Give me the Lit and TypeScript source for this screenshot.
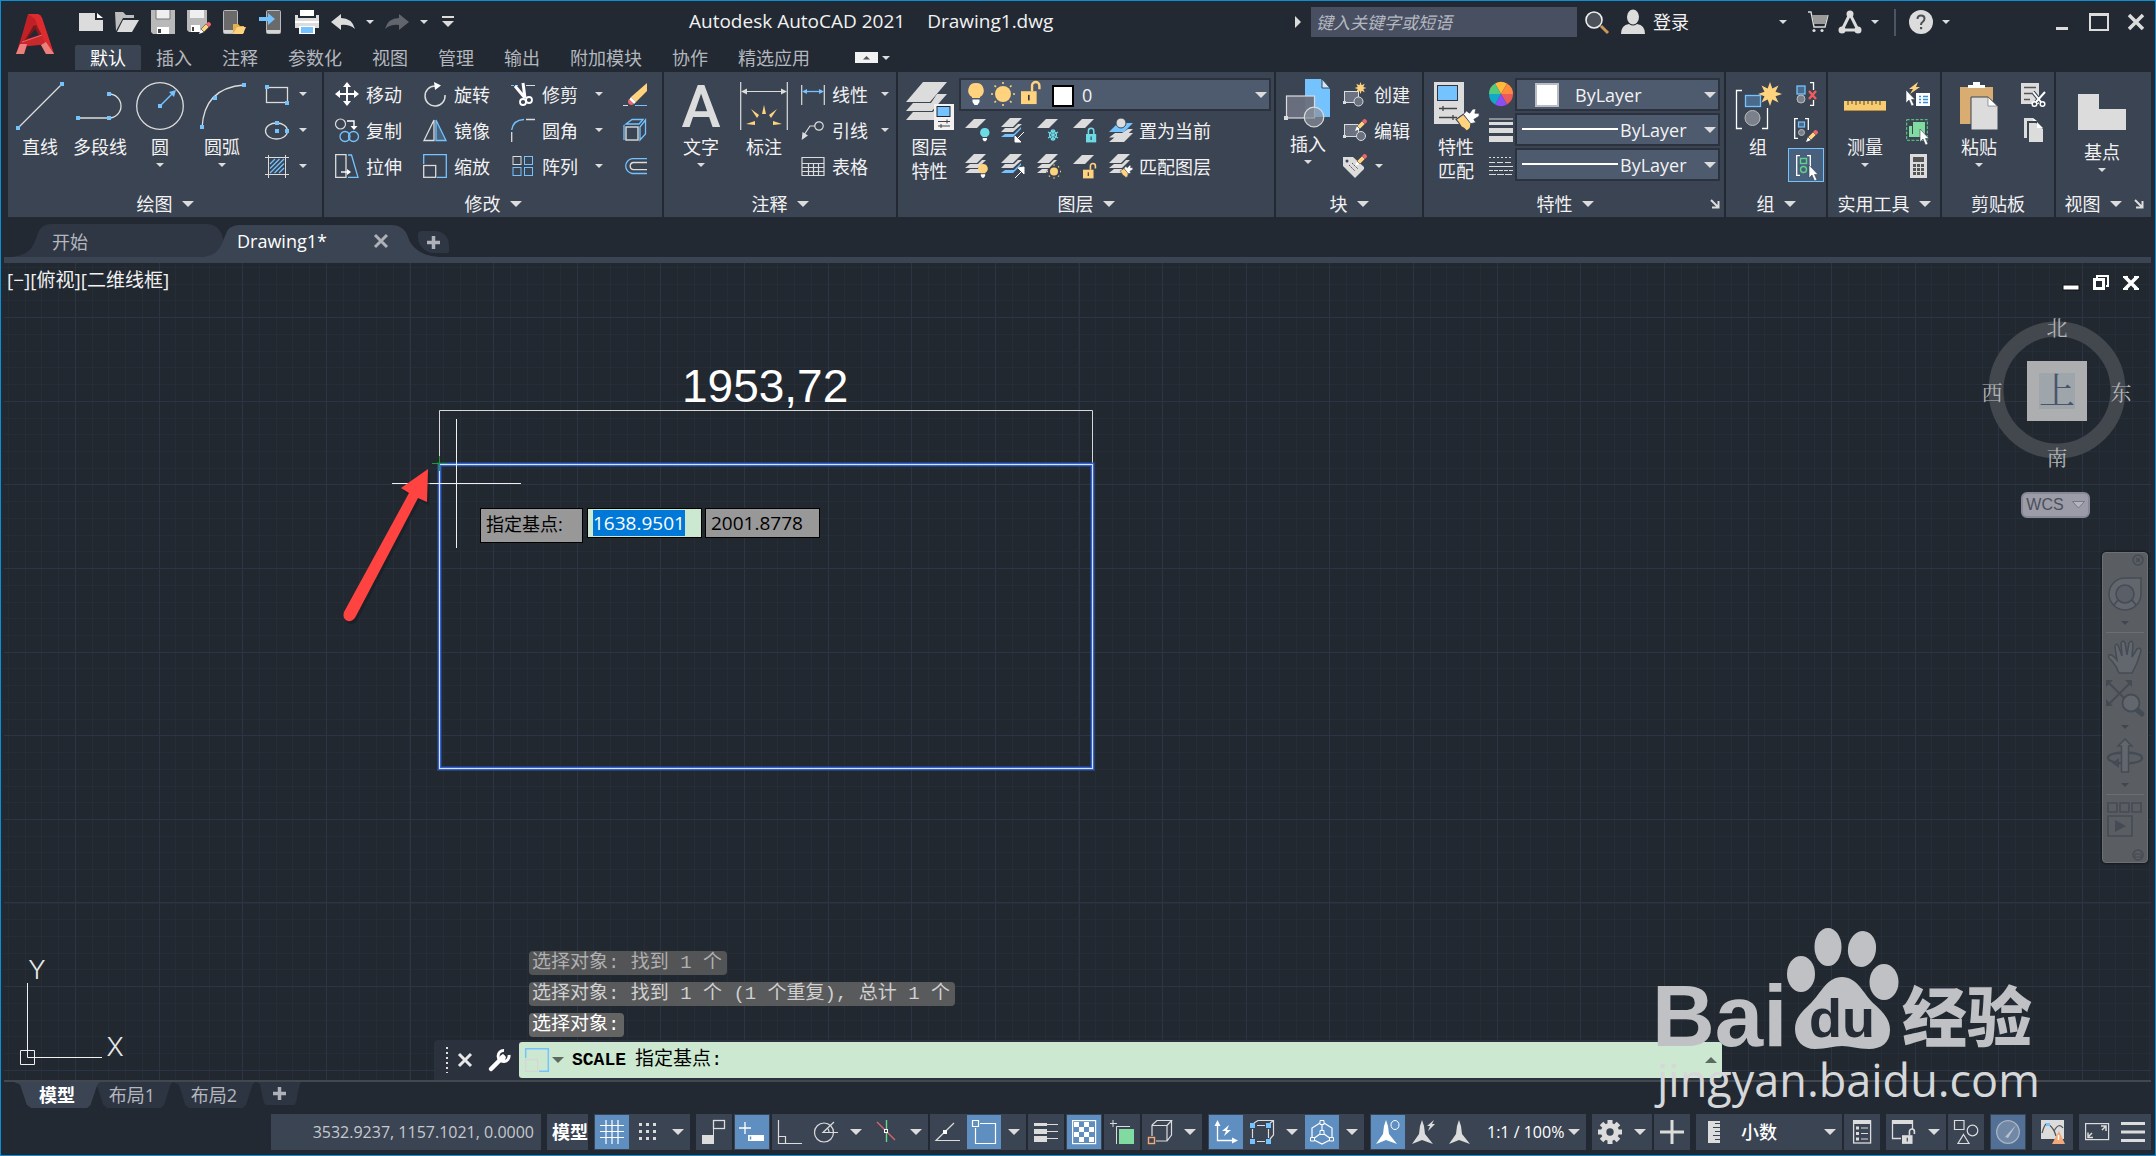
import { LitElement, html, svg, css, TemplateResult, SVGTemplateResult } from "lit";
import { customElement, query } from "lit/decorators.js";

const L = "#dcdcdc";
const B = "#74c3ff";
const Y = "#ffd27d";

const sq = (x: number, y: number) => svg`<rect x=${x - 2} y=${y - 2} width="4" height="4" fill=${B} />`;
const sheet = (y: number, fill = L) => svg`<path d="M0 ${y + 9} L9 ${y} H21 L12 ${y + 9} Z" fill=${fill} />`;
const pencil = (x: number, y: number) => svg`<g transform="translate(${x} ${y})">
  <path d="M0 12 L2 7 L5 10 Z" fill="#fff" /><path d="M2 7 L7 2 L10 5 L5 10 Z" fill=${Y} stroke="#3b4453" stroke-width=".6" />
  <path d="M7 2 L9 0 Q12 0 12 3 L10 5 Z" fill="#f2676c" /></g>`;
const pointer = (x: number, y: number) => svg`<path transform="translate(${x} ${y})" d="M0 0 V13 L3 10 L5.500 16 L8 15 L5.500 9.500 H9 Z" fill="#fff" stroke="#3b4453" stroke-width=".6" />`;
const brush = (x: number, y: number, s: number) => svg`<g transform="translate(${x} ${y}) scale(${s})">
  <path d="M0 9 L7 4 L14 12 Q15 18 10 20 Q8 17 5 16 Q3 12 0 9 Z" fill=${Y} stroke="#3b4453" stroke-width="1" />
  <path d="M7 4 L10 1 L13 3 L16 -1 L19 -1 L18 3 L22 3 L22 6 L17 9 L19 12 L14 13 Z" fill="#fff" stroke="#3b4453" stroke-width=".8" /></g>`;
const burst = (cx: number, cy: number, r: number) => {
  const p: string[] = [];
  for (let i = 0; i < 16; i++) {
    const a = (i * Math.PI) / 8;
    const q = i % 2 ? r * 0.5 : r;
    p.push(`${(cx + q * Math.sin(a)).toFixed(1)},${(cy - q * Math.cos(a)).toFixed(1)}`);
  }
  return svg`<polygon points=${p.join(" ")} fill=${Y} />`;
};
const bulb = (x: number, y: number, s: number, fill: string) => svg`<g transform="translate(${x} ${y}) scale(${s})">
  <path d="M8 0 A7.500 7.500 0 0 1 12 14 V15 H4 V14 A7.500 7.500 0 0 1 8 0 Z" fill=${fill} /><path d="M4.500 16.500 H11.500 V19 L9.500 22 H6.500 L4.500 19 Z" fill="#fff" /></g>`;
const sun = (cx: number, cy: number, r: number, o: number) => svg`<circle cx=${cx} cy=${cy} r=${r} fill=${Y} />
  ${[0, 45, 90, 135, 180, 225, 270, 315].map((a) => svg`<path d="M${cx} ${cy - r - 2} V${cy - o}" stroke=${Y} stroke-width="1.6" transform="rotate(${a} ${cx} ${cy})" />`)}`;
const lock = (x: number, y: number, s: number, fill: string, open: boolean) => svg`<g transform="translate(${x} ${y}) scale(${s})">
  <path d=${open ? "M12 10 V4 A4 4 0 0 1 20 4 V8" : "M4 10 V5 A4.500 4.500 0 0 1 13 5 V10"} fill="none" stroke=${fill} stroke-width="2.6" />
  <rect x="0" y="10" width="17" height="14" fill=${fill} /><path d="M8.500 14 V20" stroke="#333a46" stroke-width="1.8" /></g>`;

const ICONS: Record<string, [number, number, SVGTemplateResult]> = {
  caret: [8, 4, svg`<path d="M0 0 H8 L4 4 Z" fill=${L} />`],
  bigCaret: [12, 6, svg`<path d="M0 0 H12 L6 6 Z" fill=${L} />`],
  corner: [10, 10, svg`<path d="M1 1 L8 8 M8.500 2 V8.500 H2" stroke=${L} stroke-width="2" fill="none" />`],
  logo: [40, 44, svg`<path d="M13 1 H23 Q26 2 27 5 L39 41 H31 L26 32 L12 33 L9 41 H1 Q8 20 13 1 Z" fill="#bf2127" />
    <path d="M13 1 H23 Q26 2 27 5 L39 41 H33 L20 6 Z" fill="#dc2c30" /><path d="M21 12 L12 26 L25 22 Z" fill="#222933" />
    <path d="M19 12 L8 30 L12 26 L21 15 Z" fill="#7f1519" /><path d="M21 12 L27 22 L24 23 L20 15 Z" fill="#8f191d" />
    <path d="M7 29 L27 22 L30 31 L12 33 L5 34 Z" fill="#c9282d" /><path d="M7 29 L27 22" stroke="#e9666a" stroke-width="1" />
    <path d="M1 41 L5 31 L12 31 L9 41 Z" fill="#ec807e" /><path d="M26 32 L31 29 L39 41 H31 Z" fill="#ec807e" />`],
  new: [24, 24, svg`<path d="M0 3 H16 V10 H24 V21 H0 Z" fill=${L} /><path d="M18 3 L24 8 H18 Z" fill="#fff" />`],
  open: [24, 24, svg`<path d="M0 2 H8 L11 5 H19 V8 H8 L1 21 Z" fill="#bdbdbd" /><path d="M8 10 H24 L17 22 H2 Z" fill=${L} />`],
  save: [24, 24, svg`<path d="M0 0 H24 V24 H2 L0 22 Z" fill="#b9b9b9" /><rect x="5" y="0" width="14" height="9" fill="#efefef" /><rect x="6" y="17" width="12" height="7" fill="#fff" /><rect x="7" y="19" width="3" height="4" fill="#444" /><path d="M5 0V9H19V0" stroke="#777" fill="none" />`],
  saveas: [24, 24, svg`<path d="M0 0 H20 V14 L13 22 H2 L0 20 Z" fill="#b9b9b9" /><rect x="3" y="0" width="14" height="8" fill="#efefef" /><rect x="4" y="15" width="9" height="7" fill="#fff" /><rect x="5" y="17" width="2" height="4" fill="#444" />${pencil(12, 12)}`],
  mobOpen: [24, 24, svg`<rect x=".5" y=".5" width="14" height="23" rx="1" fill="#6a6a6a" stroke="#b9b9b9" /><rect x="1" y="20" width="13" height="3" fill="#d5d5d5" /><path d="M10 14 H15 L17 16 H21 V23 H10 Z" fill="#e2b04f" /><path d="M14 17 H23 L20 24 H10 Z" fill=${Y} />`],
  mobSave: [24, 24, svg`<rect x="7.500" y=".5" width="14" height="23" rx="1" fill="#6a6a6a" stroke="#b9b9b9" /><rect x="8" y="20" width="13" height="3" fill="#d5d5d5" /><path d="M0 7 H9 V3 L16 9 L9 15 V11 H0 Z" fill=${B} />`],
  print: [24, 24, svg`<path d="M5 0 H19 V6 H5 Z" fill="#fff" /><path d="M0 5 H3 V8 H21 V5 H24 V18 H0 Z" fill=${L} /><rect x="0" y="11" width="24" height="2" fill="#fff" /><path d="M4 16 H20 V24 H4 Z" fill="#fff" /><rect x="6" y="17" width="12" height="6" fill=${B} />`],
  undo: [24, 16, svg`<path d="M0 8 L10 0 V4 Q21 4 24 15 Q18 10 10 11 V16 Z" fill=${L} />`],
  redo: [24, 16, svg`<path d="M24 8 L14 0 V4 Q3 4 0 15 Q6 10 14 11 V16 Z" fill="#62666c" />`],
  custom: [12, 12, svg`<rect width="12" height="2" fill=${L} /><path d="M0 5 H12 L6 11 Z" fill=${L} />`],
  tri: [6, 12, svg`<path d="M0 0 L6 6 L0 12 Z" fill=${L} />`],
  search: [24, 24, svg`<path d="M16 16 L23 23" stroke="#c9965b" stroke-width="3" /><circle cx="9" cy="10" r="8" fill="#4b525c" stroke="#eee" stroke-width="1.6" />`],
  user: [24, 24, svg`<ellipse cx="12" cy="7" rx="6" ry="7.500" fill=${L} /><path d="M0 24 Q0 15 8 14 Q12 17 16 14 Q24 15 24 24 Z" fill=${L} />`],
  cart: [22, 22, svg`<path d="M1 1 H4 L7 16 H18 L21 4" fill="none" stroke=${L} stroke-width="1.4" /><path d="M5 4 H21 L18 13 H7 Z" fill="#9a9a9a" /><circle cx="7" cy="19.500" r="1.600" fill=${L} /><circle cx="15" cy="19.500" r="1.600" fill=${L} />`],
  a360: [24, 24, svg`<path d="M12 4 L4 20 H20 Z" fill="none" stroke=${L} stroke-width="3" /><circle cx="12" cy="4" r="3.500" fill=${L} /><circle cx="4" cy="20" r="3.500" fill=${L} /><circle cx="20" cy="20" r="3.500" fill=${L} />`],
  help: [24, 24, svg`<circle cx="12" cy="12" r="12" fill=${L} /><path d="M8.500 9 Q8.500 5.500 12 5.500 Q15.500 5.500 15.500 8.500 Q15.500 10.500 13.500 12 Q12 13 12 15" fill="none" stroke="#4a4f58" stroke-width="2" /><rect x="11" y="17" width="2.200" height="2.200" fill="#4a4f58" />`],
  min: [20, 20, svg`<rect x="4" y="15" width="12" height="3" fill=${L} />`],
  max: [20, 20, svg`<path d="M0 1 H20 V19 H0 Z M2 4 V17 H18 V4 Z" fill=${L} fill-rule="evenodd" />`],
  close: [20, 20, svg`<path d="M3 3 L17 17 M17 3 L3 17" stroke=${L} stroke-width="3.500" />`],
  ribMin: [23, 11, svg`<rect width="23" height="11" fill="#f2f2f2" /><path d="M8 7.500 H15 L11.500 4 Z" fill="#555" />`],

  line: [48, 48, svg`<path d="M2 46 L46 2" stroke=${L} stroke-width="1.3" />${sq(2, 46)}${sq(46, 2)}`],
  pline: [48, 48, svg`<path d="M2 36 H33 A12 12 0 0 0 33 12" stroke=${L} stroke-width="1.300" fill="none" />${sq(2, 36)}${sq(33, 36)}${sq(33, 12)}`],
  circle: [48, 48, svg`<circle cx="24" cy="24" r="23.300" stroke=${L} stroke-width="1.300" fill="none" /><path d="M24 24 L38 10" stroke=${B} stroke-width="1.500" /><path d="M40 8 L33 10 L38 15 Z" fill=${B} />${sq(24, 24)}`],
  arc: [48, 48, svg`<path d="M4 46 Q6 6 46 3" stroke=${L} stroke-width="1.300" fill="none" />${sq(4, 45)}${sq(17, 16)}${sq(46, 3)}`],
  rect: [24, 24, svg`<rect x="1.500" y="5.500" width="21" height="15" stroke=${L} fill="none" stroke-width="1.300" />${sq(2, 5)}${sq(22, 21)}`],
  ellipse: [24, 24, svg`<ellipse cx="11.500" cy="13" rx="11" ry="8" stroke=${L} fill="none" stroke-width="1.300" />${sq(12, 5)}${sq(12, 13)}${sq(22, 13)}`],
  hatch: [24, 24, svg`<path d="M3.500 1 V24 M20.500 1 V24 M0 3.500 H24 M0 20.500 H24" stroke=${L} /><path d="M5 10 L10 5 M5 14.500 L14.500 5 M5 19 L19 5 M9.500 19 L19 9.500 M14 19 L19 14" stroke=${B} stroke-width="1.300" />`],
  move: [24, 24, svg`<path d="M12 3 V21 M3 12 H21" stroke="#fff" stroke-width="2" /><path d="M12 0 L16 5 H8 Z M12 24 L8 19 H16 Z M0 12 L5 8 V16 Z M24 12 L19 16 V8 Z" fill="#fff" />`],
  rotate: [24, 24, svg`<path d="M12 4 A10 10 0 1 0 22 13" fill="none" stroke=${L} stroke-width="1.500" /><path d="M11 0 L18 3.500 L12 8 Z" fill="#fff" />`],
  trim: [24, 24, svg`<path d="M0 3.500 H8" stroke=${B} stroke-dasharray="3 1" /><path d="M15 3.500 H24" stroke=${L} /><path d="M4 4 L14 16 M12 1 L14 16" stroke="#fff" stroke-width="3" /><circle cx="12" cy="20" r="3" fill="none" stroke="#fff" stroke-width="1.800" /><circle cx="18" cy="18" r="3" fill="none" stroke="#fff" stroke-width="1.800" />`],
  copy: [24, 24, svg`<circle cx="5.500" cy="6" r="5" fill="none" stroke=${L} stroke-width="1.200" /><path d="M12 3 H19 V9" fill="none" stroke="#fff" stroke-width="1.400" /><path d="M15.500 8 H22.500 L19 12 Z" fill="#fff" /><circle cx="10" cy="18.500" r="5" fill="none" stroke=${B} stroke-width="1.300" /><circle cx="18.500" cy="18.500" r="5" fill="none" stroke=${B} stroke-width="1.300" />`],
  mirror: [24, 24, svg`<path d="M11 2 V22.500 H1 Z" fill="none" stroke=${L} stroke-width="1.300" /><path d="M13 2 V22.500 H23 Z" fill="#47637f" stroke=${B} stroke-width="1.300" />`],
  fillet: [24, 24, svg`<path d="M.7 12 Q2 2 13 1.500" fill="none" stroke=${B} stroke-width="1.400" /><path d="M.7 14 V24 M15 1.500 H24" stroke=${L} stroke-width="1.300" />`],
  stretch: [24, 24, svg`<path d="M.7 .7 H11 V23.300 H.7 Z" fill="none" stroke=${L} stroke-width="1.300" /><path d="M13 1 H16.500 L23 23.300 H13" fill="none" stroke=${B} stroke-width="1.300" /><path d="M6 18 H13" stroke="#fff" stroke-width="1.400" /><path d="M12 15 L16 18 L12 21 Z" fill="#fff" />`],
  scale: [24, 24, svg`<path d="M.7 10 V.7 H23.300 V23.300 H14" fill="none" stroke=${B} stroke-width="1.300" /><rect x=".7" y="11.500" width="12" height="11.800" fill="none" stroke=${L} stroke-width="1.300" />`],
  array: [24, 24, svg`<rect x="2" y="2.500" width="8" height="8" fill="none" stroke=${L} /><rect x="13.500" y="2.500" width="8" height="8" fill="none" stroke=${B} /><rect x="2" y="13.500" width="8" height="8" fill="none" stroke=${B} /><rect x="13.500" y="13.500" width="8" height="8" fill="none" stroke=${B} />`],
  erase: [24, 24, svg`<path d="M24 1 V9 L13 20 L8 15 Z" fill=${Y} /><path d="M8 15 L13 20 L11 22 L6 18 Z" fill="#fff" /><path d="M6 17 L11 22 Q8 24 6 22 Q4 20 6 17 Z" fill="#f2676c" /><path d="M0 23.500 H5" stroke=${L} /><path d="M12 23.500 H24" stroke=${B} />`],
  explode: [24, 24, svg`<rect x="3" y="9" width="12" height="13" fill="none" stroke=${L} stroke-width="1.400" /><path d="M1 22 V7 M3 6 L9 1.500 H20 L16 6 Z M17 9 L22.500 2 V16 L17 22 Z" fill="none" stroke=${B} stroke-width="1.300" />`],
  offset: [24, 24, svg`<path d="M24 4.700 H9 A7.500 7.500 0 0 0 9 19.500 H24" fill="none" stroke=${B} stroke-width="1.300" /><path d="M24 8.500 H10 A3.700 3.700 0 0 0 10 15.700 H24" fill="none" stroke=${L} stroke-width="1.300" />`],
  dim: [48, 48, svg`<path d="M.7 0 V48 M47.300 0 V48 M2 9.500 H46" stroke=${L} stroke-width="1.200" /><path d="M1 9.500 L7 6.500 V12.500 Z M47 9.500 L41 6.500 V12.500 Z" fill=${L} />
    <g fill=${Y}><path d="M22 32 L24 23 L26 32 Z" /><path d="M17 36 L11 27 L19 33 Z" /><path d="M31 36 L37 27 L29 33 Z" /><path d="M15 39 L6 42 L15 43 Z" /><path d="M33 39 L42 42 L33 43 Z" /></g>`],
  linear: [24, 24, svg`<path d="M.7 3 V23 M23.300 3 V23" stroke=${L} stroke-width="1.200" /><path d="M3 9.500 H21" stroke=${B} stroke-width="1.300" /><path d="M1 9.500 L6 7 V12 Z M23 9.500 L18 7 V12 Z" fill=${B} />`],
  leader: [24, 24, svg`<circle cx="18" cy="8" r="4.200" fill="none" stroke=${L} stroke-width="1.200" /><path d="M14 8 H9 L3 17" fill="none" stroke=${L} stroke-width="1.200" /><path d="M.7 22 L1.500 14 L7 17.500 Z" fill=${L} />`],
  table: [24, 24, svg`<path d="M1 3.500 H23 V21.500 H1 Z M1 9.500 H23 M1 13.500 H23 M1 17.500 H23 M7.500 9 V21 M12.500 9 V21 M17.500 9 V21" fill="none" stroke=${L} stroke-width="1.200" />`],
  layers: [48, 48, svg`<path d="M0 20 L17 0 H41 L24 20 Z" fill=${L} /><path d="M0 29 L7 21 H25 L31 12 H41 L26 29 Z" fill=${L} /><path d="M0 38 L7 30 H27 L31 24 H36 V38 Z" fill=${L} /><rect x="28" y="22" width="20" height="26" fill="#f2f2f2" /><rect x="31" y="24.500" width="13" height="10" fill=${B} stroke="#223" /><path d="M32 39.500 H44 M32 44 H44 M41 37.500 V41.500 M35 42 V46" stroke="#444" />`],
  lyOff: [24, 24, svg`${sheet(1)}${bulb(15, 10, 0.6, "#6cdbe6")}`],
  lyIso: [24, 24, svg`${sheet(0)}<path d="M0 19 L4 16 H13 L20 9 V11 L12 19 Z" fill=${B} /><path d="M0 14 L4 10 H13 L17 6 H21 L12 14 Z" fill=${L} /><path d="M23 14 L15 22 M14 18 V24 H20 Z" stroke="#fff" fill="#fff" />`],
  lyFrz: [24, 24, svg`${sheet(1)}<g stroke="#6cdbe6" stroke-width="1.300" fill="none"><path d="M16 11 V23 M11 14 L21 20 M21 14 L11 20" /><circle cx="16" cy="17" r="3.500" /><path d="M14 12 L16 14 L18 12 M14 22 L16 20 L18 22" /></g>`],
  lyLock: [24, 24, svg`${sheet(1)}${lock(13, 10, 0.6, "#6cdbe6", false)}`],
  lyOn: [24, 24, svg`${sheet(0)}<path d="M0 14 L5 10 H13 L17 6 H21 L13 14 Z M0 19 L5 15 H13 L17 11 V19 Z" fill=${L} />${bulb(13, 10, 0.62, Y)}`],
  lyUniso: [24, 24, svg`${sheet(0)}<path d="M0 19 L4 16 H13 L20 9 V11 L12 19 Z" fill=${B} /><path d="M0 14 L4 10 H13 L17 6 H21 L12 14 Z" fill=${L} /><path d="M14 24 L21 17 M23 13 V20 L17 14 Z" stroke="#fff" fill="#fff" />`],
  lyThaw: [24, 24, svg`${sheet(0)}<path d="M0 14 L5 10 H13 L17 6 H20 L12 14 Z M0 19 L5 15 H11 L9 19 Z" fill=${L} />${sun(17, 17.5, 4, 7)}`],
  lyUnlock: [24, 24, svg`${sheet(1)}${lock(10, 9.5, 0.62, Y, true)}`],
  lyCur: [24, 24, svg`<path d="M0 24 L6 19 H13 L19 15 H24 L15 24 Z M0 19.500 L6 15 H13 L19 11 H24 L15 19.500 Z" fill=${L} /><path d="M0 14 L9 5 H24 L15 14 Z" fill=${B} /><circle cx="12" cy="5" r="5" fill=${L} stroke="#3b4453" />`],
  lyMatch: [24, 24, svg`${sheet(0)}<path d="M0 14 L5 10 H13 L17 6 H21 L13 14 Z M0 19 L5 15 H13 V19 Z" fill=${L} />${brush(11, 12, 0.58)}`],
  layState: [108, 24, svg`${bulb(2, 1, 1, Y)}${sun(37, 12, 8, 12)}${lock(55, 0, 0.92, Y, true)}<rect x="87" y="4" width="20" height="20" fill="#fff" stroke="#000" stroke-width="2" />`],
  insert: [48, 48, svg`<path d="M21 0 H37 L46 10 V38 H21 Z" fill=${B} /><path d="M38 0 L46 9 H38 Z" fill="#cfe8ff" stroke="#3b4453" /><rect x="2.500" y="17" width="28" height="22" fill="#6a7180" fill-opacity=".95" stroke=${L} stroke-width="1.200" /><circle cx="30" cy="38" r="9.800" fill="#8a909c" fill-opacity=".7" stroke=${L} stroke-width="1.200" /><rect x="0" y="37" width="4" height="4" fill=${L} />`],
  create: [24, 24, svg`<rect x="1.500" y="9.500" width="14" height="11" fill="#6a7180" stroke=${L} /><circle cx="15.500" cy="19.500" r="4.500" fill="#6a7180" stroke=${L} /><rect y="19" width="3" height="3" fill=${L} />${burst(17.500, 6, 6)}`],
  edit: [24, 24, svg`<rect x="1.500" y="6.500" width="14" height="12" fill="#6a7180" stroke=${L} /><circle cx="18" cy="18" r="4.500" fill="#6a7180" stroke=${L} /><rect y="17" width="3" height="3" fill=${L} />${pencil(12, 1)}`],
  tag: [24, 24, svg`<path d="M0 3 H10 L21 13 V15 L12 24 L0 12 Z" fill=${L} /><circle cx="4" cy="7" r="1.500" fill="#3b4453" /><path d="M6 11 L12 17 M9 9 L15 15" stroke="#555" stroke-dasharray="2 1" />${pencil(12, 0)}`],
  matchProp: [48, 48, svg`<path d="M2 0 H32 V42 H2 Z" fill=${L} /><rect x="5.500" y="3.500" width="20" height="15" fill=${B} stroke="#334" /><path d="M7 26.500 H25 M11 24 V29 M7 35.500 H25 M21 33 V38" stroke="#444" stroke-width="1.300" />${brush(24, 28, 1.05)}`],
  wheel: [24, 24, svg`${["#ffb93c", "#ff8b3e", "#ec5a5a", "#8b4df5", "#12a9c8", "#55c97d"].map((c, i) => svg`<path d="M12 12 V0 A12 12 0 0 1 22.400 6 Z" fill=${c} transform="rotate(${i * 60 - 30} 12 12)" />`)}`],
  weights: [24, 24, svg`<path d="M0 1 H24" stroke=${L} /><rect y="4" width="24" height="3" fill=${L} /><rect y="10" width="24" height="5" fill=${L} /><rect y="18" width="24" height="6" fill=${L} />`],
  types: [24, 24, svg`<path d="M0 3.500 H24" stroke=${L} stroke-dasharray="2 2" /><path d="M0 8.500 H24" stroke=${L} stroke-dasharray="6 2" /><path d="M0 12.500 H24" stroke=${L} /><path d="M0 16.500 H24" stroke=${L} stroke-dasharray="4 1" /><path d="M0 20.500 H24" stroke=${L} stroke-dasharray="7 1" />`],
  group: [48, 48, svg`<path d="M8 8.500 H2.500 V46.500 H8 M28 46.500 H33.500 V26" fill="none" stroke="#fff" stroke-width="1.300" /><rect x="11.500" y="13.500" width="15" height="11" fill="#4a6a8c" stroke=${B} stroke-width="1.300" /><circle cx="18.500" cy="36" r="7.500" fill="#7a808c" stroke="#bbb" />${burst(36, 12, 12)}`],
  ungroup: [24, 24, svg`<path d="M16 .7 H19.500 V8 M19.500 18 V23.300 H16" fill="none" stroke="#fff" stroke-width="1.300" /><rect x="3" y="4" width="8" height="8" fill="#4a6a8c" stroke=${B} stroke-width="1.300" /><circle cx="7" cy="17" r="4" fill="#7a808c" stroke="#bbb" /><path d="M15 9 L22 17 M22 9 L15 17" stroke="#f25c5c" stroke-width="2.400" />`],
  grpEdit: [24, 24, svg`<path d="M4 .7 H.7 V20.300 H4 M11 .7 H14.300 V12" fill="none" stroke="#fff" stroke-width="1.300" /><rect x="4.500" y="4" width="6" height="5" fill="#4a6a8c" stroke=${B} stroke-width="1.200" /><circle cx="7.500" cy="14.500" r="3" fill="#7a808c" stroke="#bbb" />${pencil(12, 12)}`],
  grpSel: [24, 24, svg`<path d="M6 2.700 H2.700 V22.300 H6 M13 2.700 H16.300 V14" fill="none" stroke="#fff" stroke-width="1.300" /><rect x="6.500" y="5.500" width="6" height="5" fill="none" stroke="#5fd38a" stroke-width="1.400" /><circle cx="9.500" cy="16.500" r="3" fill="none" stroke="#5fd38a" stroke-width="1.400" />${pointer(15, 12)}`],
  measure: [48, 48, svg`<rect x="3" y="19" width="42" height="10" fill="#f7cb72" /><path d="M3 28.500 H45" stroke="#b98d3d" /><path d="M7 19 V23 M11 19 V22 M15 19 V23 M19 19 V22 M23 19 V23 M27 19 V22 M31 19 V23 M35 19 V22 M39 19 V23" stroke="#54451f" />`],
  quick: [24, 24, svg`<path d="M12 0 L3 7 H7 L4 12 L14 5 H10 Z" fill=${Y} /><rect x="10" y="11" width="14" height="13" fill="#fff" /><path d="M13 14.500 H15 M17 14.500 H22 M13 17.500 H15 M17 17.500 H22 M13 20.500 H15 M17 20.500 H22" stroke="#2f8fe0" stroke-width="1.500" />${pointer(0, 8)}`],
  selAll: [24, 24, svg`<rect x=".7" y="1.700" width="20.600" height="20.600" fill="none" stroke="#5fd38a" stroke-dasharray="3 1.500" /><path d="M3 8 H6 V16 H15 V19 H3 Z" fill="#7fdba0" /><rect x="7" y="4" width="12" height="12" fill="#7fdba0" />${pointer(14, 11)}`],
  calc: [24, 24, svg`<rect x="4" width="17" height="24" fill=${L} /><rect x="7" y="3" width="11" height="5" fill="#555" /><path d="M7 11.500 H10 M11 11.500 H14 M15 11.500 H18 M7 15.500 H10 M11 15.500 H14 M15 15.500 H18 M7 19.500 H10 M11 19.500 H14 M15 19.500 H18" stroke="#555" stroke-width="3" />`],
  paste: [48, 48, svg`<path d="M5 5 H38 V24 H16 V42 H5 Z" fill="#d9ac72" /><path d="M13 6 V3 H18 V0 H25 V3 H30 V6 Z" fill="#fff" /><path d="M16 15 H33 L43 24 V48 H16 Z" fill=${L} stroke="#3b4453" /><path d="M33 15 L42 24 H33 Z" fill="#fff" stroke="#3b4453" stroke-width=".5" />`],
  cut: [24, 24, svg`<rect x="0" y="1" width="18" height="21" fill=${L} /><path d="M3 5.500 H15 M3 11.500 H11 M3 17.500 H9" stroke="#555" stroke-width="1.400" /><path d="M12 10 L20 20 M24 10 L15 20" stroke="#3b4453" stroke-width="4" /><path d="M12 10 L20 20 M24 10 L15 20" stroke="#fff" stroke-width="2" /><circle cx="13.500" cy="22" r="2.300" fill="#3b4453" stroke="#fff" stroke-width="1.500" /><circle cx="21.500" cy="22" r="2.300" fill="#3b4453" stroke="#fff" stroke-width="1.500" />`],
  copyClip: [24, 24, svg`<path d="M3 0 H12 V3 H6 V20 H3 Z" fill=${L} /><path d="M8 5 H15 L22 11 V24 H8 Z" fill=${L} /><path d="M16 4 L22 10 H16 Z M12 0 L16 3 H12 Z" fill="#fff" />`],
  base: [48, 48, svg`<path d="M0 12 H21 V27 H48 V48 H0 Z" fill=${L} />`],

  sGrid: [36, 36, svg`<path d="M12 6 V30 M18 6 V30 M24 6 V30 M6 11.500 H30 M6 17.500 H30 M6 23.500 H30" stroke="#fff" stroke-width="1.200" />`],
  sSnap: [36, 36, svg`${[10, 17, 24].map((x) => [10, 17, 24].map((y) => svg`<rect x=${x - 1} y=${y - 1} width="3" height="3" fill=${L} />`))}`],
  sInfer: [36, 36, svg`<rect x="17.500" y="6.500" width="11" height="8" fill="none" stroke=${L} stroke-width="1.300" /><path d="M17.500 14 V21" stroke=${L} /><rect x="6" y="21" width="12" height="9" fill=${L} />`],
  sDyn: [36, 36, svg`<path d="M11 8 V20 M5 14 H17" stroke="#fff" stroke-width="1.300" /><rect x="14" y="21" width="16" height="6" fill="#fff" /><path d="M16.500 22.500 V25.500" stroke="#5f8fc0" stroke-width="1.500" />`],
  sOrtho: [36, 36, svg`<path d="M6.500 6 V29.500 H30 M6.500 22.500 H13.500 V29" fill="none" stroke=${L} stroke-width="1.200" />`],
  sPolar: [36, 36, svg`<circle cx="16" cy="18.500" r="9.500" fill="none" stroke=${L} stroke-width="1.200" /><path d="M30 18.500 H15 L26 8 M21 18 Q21 15 19 14" fill="none" stroke=${L} stroke-width="1.200" />`],
  sIso: [36, 36, svg`<path d="M9 8 L27 26" stroke="#d8686c" stroke-width="1.200" /><path d="M18.500 6 V28" stroke="#69d58c" stroke-width="1.400" /><rect x="16.500" y="15.500" width="3" height="3" fill="#3b4453" stroke="#fff" />`],
  sTrack: [36, 36, svg`<path d="M30 26.500 H6 L24 9" fill="none" stroke=${L} stroke-width="1.200" /><rect x="13" y="16" width="4" height="4" fill="#fff" />`],
  sOsnap: [36, 36, svg`<path d="M14 9.500 H29.500 V29.500 H9.500 V14 M6.500 6.500 H12.500 V12.500 H6.500 Z" fill="none" stroke="#fff" stroke-width="1.200" />`],
  sLw: [36, 36, svg`<path d="M6 10.500 H30 M6 17.500 H30 M6 24.500 H30" stroke=${L} /><rect x="6" y="9" width="13" height="3" fill=${L} /><rect x="6" y="15" width="13" height="5" fill=${L} /><rect x="6" y="22" width="13" height="6" fill=${L} />`],
  sTrans: [36, 36, svg`<rect x="6.600" y="6.600" width="23" height="23" fill="none" stroke="#fff" stroke-width="1.200" />${[0, 1, 2, 3].map((r) => [0, 1, 2, 3].map((c) => ((r + c) % 2 ? svg`` : svg`<rect x=${8 + c * 5} y=${8 + r * 5} width="5" height="5" fill="#fff" />`)))}`],
  sCycle: [36, 36, svg`<path d="M9 6 V13 M6 9.500 H13 M12.500 30 V12.500 H26" fill="none" stroke=${L} /><rect x="15" y="15" width="15" height="15" fill="#7fdba0" />`],
  s3d: [36, 36, svg`<path d="M10 22 V11.500 H25 V27 H14 M10 11 L15 6.500 H29.500 L25 11.500 M29.500 6.500 V21 L25 27" fill="none" stroke=${L} stroke-width="1.200" /><rect x="6.500" y="23.500" width="6" height="6" fill="none" stroke="#f2a878" stroke-width="1.400" />`],
  sUcs: [36, 36, svg`<path d="M9.500 9 V26.500 H27" fill="none" stroke="#fff" stroke-width="1.300" /><path d="M9.500 6 L12.500 12 H6.500 Z M30 26.500 L24 29.500 V23.500 Z M21 11 L14 17 H18 L16 22 L23 16 H19 Z" fill="#fff" />`],
  sFilter: [36, 36, svg`<path d="M13 11.500 H21 M8.500 15 V24 M24.500 15 V24 M13 27.500 H21 M10 9 L14 6.500 H29.500 V21 L26 25 M26 9 L29 7" fill="none" stroke=${L} stroke-width="1.200" /><path d="M6 9 H11 V14 H6 Z M22 9 H27 V14 H22 Z M6 25 H11 V30 H6 Z M22 25 H27 V30 H22 Z" fill=${B} />`],
  sGizmo: [36, 36, svg`<path d="M16 9 L8 14 V24 M20 9 L28 14 V24 M10 26 L18 30 L26 26 M18 10 V17 M16 20 L9 25 M20 20 L27 25" fill="none" stroke="#fff" stroke-width="1.200" /><path d="M16 6.500 H20 V10.500 H16 Z M16 16.500 H20 V20.500 H16 Z M6.500 23.500 H10.500 V27 H6.500 Z M25.500 23.500 H29.500 V27 H25.500 Z" fill="#5f8fc0" stroke="#fff" />`],
  sAnno: [36, 36, svg`<path d="M16 6 L18 12 L19 20 L27 30 L16 26 L6 30 L13 20 L14 12 Z" fill="#fff" /><ellipse cx="25" cy="11" rx="4" ry="4.500" fill="none" stroke="#fff" />`],
  sAnnoAuto: [36, 36, svg`<path d="M16 6 L18 12 L19 20 L27 30 L16 26 L6 30 L13 20 L14 12 Z M28 6 L21 12 H24 L22 17 L29 10 H26 Z" fill=${L} />`],
  sAnnoScale: [36, 36, svg`<path d="M17 6 L19 12 L20 20 L28 30 L17 26 L7 30 L14 20 L15 12 Z" fill=${L} />`],
  sGear: [36, 36, svg`<g fill=${L}>${[0, 45, 90, 135].map((a) => svg`<rect x="15.500" y="6" width="5" height="24" transform="rotate(${a} 18 18)" />`)}<circle cx="18" cy="18" r="9" /></g><circle cx="18" cy="18" r="3.700" fill="#3b4453" />`],
  sPlus: [36, 36, svg`<path d="M18 6 V30 M6 18 H30" stroke=${L} stroke-width="3" />`],
  sRuler: [36, 36, svg`<rect x="12" y="7" width="12" height="22" fill=${L} /><path d="M19 9.500 H24 M17 13.500 H24 M19 17.500 H24 M17 21.500 H24 M19 25.500 H24" stroke="#3b4453" />`],
  sProps: [36, 36, svg`<rect x="9.600" y="7" width="17" height="22" fill="none" stroke=${L} stroke-width="1.300" /><rect x="9" y="6" width="18" height="4" fill=${L} /><path d="M12 14 H15 M12 19.500 H15 M12 25 H15" stroke=${L} stroke-width="3" /><path d="M17 14 H24 M17 19.500 H24 M17 25 H24" stroke=${L} />`],
  sUiLock: [36, 36, svg`<path d="M15 24.500 H6.500 V7 H26.500 V15" fill="none" stroke=${L} stroke-width="1.300" /><rect x="6" y="6" width="21" height="4" fill=${L} />${lock(16, 15, 0.62, L, true)}`],
  sIsolate: [36, 36, svg`<path d="M6.500 6.500 H16 V15.500 H6.500 Z M15.500 20.500 L21 29.500 H10 Z" fill="none" stroke=${L} stroke-width="1.200" /><circle cx="24.500" cy="16.500" r="5.300" fill="none" stroke=${L} stroke-width="1.200" />`],
  sPerf: [36, 36, svg`<circle cx="18" cy="18" r="11.300" fill="#7189a6" stroke="#a9b4c2" stroke-width="1.300" /><path d="M26 11 L15 23 L18 24 Z" fill="#b9c2cc" />`],
  sGraph: [41, 36, svg`<rect x="9" y="6" width="23" height="19" fill=${L} /><path d="M10 19 Q13 8 16 10 Q22 14 24 22 M22 17 Q27 8 31 14" stroke="#555" fill="none" stroke-width="1.300" /><rect x="14" y="9" width="4" height="3" fill=${B} /><path d="M27 17 L33 30 H20 Z" fill="#f2a878" /><path d="M26.500 21 V26" stroke="#fff" stroke-width="1.500" />`],
  sFull: [36, 36, svg`<rect x="6.600" y="9.600" width="23" height="16" fill="none" stroke=${L} stroke-width="1.200" /><path d="M9 23 L13 19 M9 18.500 V23.500 H14 M27 12 L23 16 M27 17 V12 H22" stroke=${L} stroke-width="1.500" fill="none" />`],
  sMenu: [36, 36, svg`<path d="M6 9.500 H30 M6 18 H30 M6 26.500 H30" stroke=${L} stroke-width="3" />`],

  wMin: [18, 18, svg`<rect x="1" y="11" width="16" height="5" fill="#fff" stroke="#111" />`],
  wRest: [18, 18, svg`<path d="M5 4 V2 H16 V12 H14" fill="none" stroke="#fff" stroke-width="2" /><rect x="2.500" y="5.500" width="9" height="9" fill="none" stroke="#fff" stroke-width="3" />`],
  wClose: [18, 18, svg`<path d="M3 3 L15 15 M15 3 L3 15" stroke="#fff" stroke-width="3.500" /><path d="M1 3 H6 M12 3 H17 M1 15 H6 M12 15 H17" stroke="#fff" stroke-width="2" />`],
  cmdX: [14, 14, svg`<path d="M1 1 L13 13 M13 1 L1 13" stroke="#e8e8e8" stroke-width="3" />`],
  wrench: [24, 24, svg`<path d="M3 21 L15 9" stroke="#fff" stroke-width="4.500" stroke-linecap="round" /><path d="M21 7 A5.500 5.500 0 1 1 16 2.500" stroke="#fff" stroke-width="3" fill="none" /><path d="M13 12 L12 8 L15 6 L18 9 L17 12 Z" fill="#fff" />`],
  cmdScale: [24, 24, svg`<path d="M.7 10 V.7 H23.300 V23.300 H14" fill="none" stroke=${B} stroke-width="1.500" /><rect x=".7" y="11.500" width="12" height="11.800" fill="none" stroke="#d6d6d6" stroke-width="1.300" />`],
  darkCaret: [12, 6, svg`<path d="M0 0 H12 L6 6 Z" fill="#5c6a60" />`],
  upCaret: [12, 6, svg`<path d="M0 6 H12 L6 0 Z" fill="#5c6a60" />`],
  plus: [13, 13, svg`<path d="M6.500 0 V13 M0 6.500 H13" stroke="#aeb2b8" stroke-width="3.500" />`],
  tabX: [14, 14, svg`<path d="M1 1 L13 13 M13 1 L1 13" stroke="#aeb2b8" stroke-width="3" />`],

  navX: [12, 12, svg`<circle cx="6" cy="6" r="5" fill="none" stroke="#454b55" stroke-width="1.500" /><path d="M4 4 L8 8 M8 4 L4 8" stroke="#454b55" stroke-width="1.500" />`],
  navMin: [12, 12, svg`<circle cx="6" cy="6" r="5" fill="none" stroke="#454b55" stroke-width="1.500" /><path d="M3 5 H9 V8 H3 Z" fill="none" stroke="#454b55" />`],
  navCaret: [8, 4, svg`<path d="M0 0 H8 L4 4 Z" fill="#41474f" />`],
  navWheel: [34, 34, svg`<path d="M17 1 H33 V17 A16 16 0 1 1 17 1 Z" fill="#62676d" stroke="#454b55" stroke-width="1.500" /><circle cx="17" cy="17" r="9" fill="#5a5e66" stroke="#454b55" stroke-width="1.500" /><path d="M10 23 L6 28 M24 23 L28 28" stroke="#454b55" stroke-width="1.500" />`],
  navHand: [36, 36, svg`<path d="M12 34 Q10 28 5 22 Q0 18 2 16 Q5 15 10 21 L8 8 Q8 4 11 6 L15 17 L14 4 Q16 0 18 4 L20 16 L22 4 Q25 0 26 5 L25 18 L30 10 Q34 8 34 12 L30 24 L25 34 Z" fill="#62676d" stroke="#454b55" stroke-width="1.500" />`],
  navZoom: [38, 36, svg`<path d="M2 2 L25 25 M25 2 L2 25" stroke="#454b55" stroke-width="2" /><path d="M0 0 H7 L0 7 Z M26 0 V7 L19 0 Z M0 26 V19 L7 26 Z" fill="#454b55" /><path d="M30 29 L36 34" stroke="#454b55" stroke-width="5" stroke-linecap="round" /><circle cx="25" cy="23" r="8.500" fill="#62676d" stroke="#454b55" stroke-width="1.800" />`],
  navOrbit: [36, 36, svg`<path d="M11 25 Q1 23 1 20 Q1 15 18 14.500 Q35 15 35 20 Q35 25 18 25.500 L11 25" fill="none" stroke="#454b55" stroke-width="2.400" /><path d="M5 25 L12 20 V30 Z" fill="#454b55" /><path d="M18 1 L25 8 H21.500 V34 H14.500 V8 H11 Z" fill="#62676d" stroke="#454b55" stroke-width="1.500" />`],
  navShow: [36, 36, svg`<path d="M1 2 H10 V11 H1 Z M13 2 H22 V11 H13 Z M25 2 H34 V11 H25 Z M1 15 H25 V35 H1 Z" fill="none" stroke="#454b55" stroke-width="1.600" /><path d="M8 19 L19 25 L8 31 Z" fill="#454b55" />`],
};

const icon = (name: string) => {
  const [w, h, body] = ICONS[name];
  return html`<svg class="ic" width=${w} height=${h} viewBox="0 0 ${w} ${h}" aria-hidden="true">${body}</svg>`;
};

const drop = (label: string, name = "caret") => html`<button class="drop" aria-label="${label}">${icon(name)}</button>`;
const big = (name: string, lines: string[], caret = false, cls = "") => html`
  <button class="big ${cls}"><span class="pic">${name === "text" ? html`<svg class="ic" width="48" height="48" viewBox="0 0 48 48" aria-hidden="true"><text class="glyph" x="24" y="45" text-anchor="middle">A</text></svg>` : icon(name)}</span>
    ${lines.map((l) => html`<span class="lbl">${l}</span>`)}${caret ? html`<span class="dn">${icon("caret")}</span>` : ""}</button>`;
const small = (name: string, label: string, text = true) =>
  html`<button class="small" aria-label=${label}><span class="box">${icon(name)}</span>${text ? html`<span class="cap">${label}</span>` : ""}</button>`;
const square = (name: string, label: string, on = false) => html`<button class="square ${on ? "on" : ""}" aria-label=${label}>${icon(name)}</button>`;
const panel = (cls: string, title: string, body: TemplateResult, caret = true, corner = false) => html`
  <section class="panel ${cls}"><div class="body">${body}</div>
    <footer class="foot"><button class="title">${title}${caret ? icon("bigCaret") : ""}</button>${corner ? html`<button class="corner" aria-label="${title}设置">${icon("corner")}</button>` : ""}</footer></section>`;

const STATUS: string[][][] = [
  [["!coords"]],
  [["!model"]],
  [["*sGrid", "sSnap", "v"]],
  [["sInfer"], ["*sDyn"], ["sOrtho", "sPolar", "v", "sIso", "v"], ["sTrack", "*sOsnap", "v"], ["sLw"], ["*sTrans"], ["sCycle"], ["s3d", "v"]],
  [["*sUcs", "sFilter", "v", "*sGizmo", "v"]],
  [["*sAnno", "sAnnoAuto", "sAnnoScale", "!scale"]],
  [["sGear", "v"], ["sPlus"]],
  [["sRuler", "!units"], ["sProps"]],
  [["sUiLock", "v"], ["sIsolate"]],
  [["*sPerf"]],
  [["sGraph"]],
  [["sFull", "sMenu"]],
];

const NAMES: Record<string, string> = {
  sGrid: "栅格", sSnap: "捕捉", sInfer: "推断约束", sDyn: "动态输入", sOrtho: "正交", sPolar: "极轴追踪", sIso: "等轴测草图", sTrack: "对象捕捉追踪",
  sOsnap: "对象捕捉", sLw: "线宽", sTrans: "透明度", sCycle: "选择循环", s3d: "三维对象捕捉", sUcs: "动态UCS", sFilter: "选择过滤", sGizmo: "小控件",
  sAnno: "注释可见性", sAnnoAuto: "自动缩放", sAnnoScale: "注释比例", sGear: "切换工作空间", sPlus: "注释监视器", sRuler: "单位", sProps: "快捷特性",
  sUiLock: "锁定用户界面", sIsolate: "隔离对象", sPerf: "硬件加速", sGraph: "图形性能", sFull: "全屏显示", sMenu: "自定义",
};

const STEP = 83.63;
const series = (from: number, n: number, step: number) => Array.from({ length: n }, (_, i) => Math.round(from + i * step) + 0.5);

@customElement("app-root")
export class AppRoot extends LitElement {
  @query("#dx") private dx!: HTMLInputElement;

  static styles = css`
    :host { display: block; font-family: "Open Sans", "Noto Sans CJK SC", sans-serif; font-size: 18px; line-height: 24px; color: #f2f2f2; }
    * { box-sizing: border-box; }
    button, input, select { font: inherit; color: inherit; background: none; border: 0; padding: 0; margin: 0; border-radius: 0; }
    button { display: inline-flex; align-items: center; justify-content: center; white-space: nowrap; }
    input, select { min-width: 0; outline: 0; appearance: none; }
    a { color: inherit; text-decoration: none; }
    svg { overflow: visible; }
    .ic { display: block; flex: none; }
    .window { position: relative; min-height: 100vh; display: flex; flex-direction: column; background: #222933; border: 1px solid #0d8fd3; overflow: hidden; }

    .head { display: grid; grid-template-columns: 74px minmax(0, 1fr); }
    .logo { padding: 12px 0 0 14px; display: block; }
    .titlebar { display: flex; align-items: center; height: 42px; margin-left: -2px; }
    .qat { display: flex; align-items: center; }
    .qat .tool { width: 36px; height: 30px; }
    .qat .mini { width: 18px; height: 30px; }
    .qat .opt { width: 30px; height: 30px; }
    .name { display: flex; gap: 22px; margin-left: 226px; padding-bottom: 2px; white-space: nowrap; font-size: 19px; }
    .right { margin-left: auto; display: flex; align-items: center; height: 42px; }
    .search { width: 266px; height: 30px; background: #484f60; padding: 0 5px; margin: 0 4px 0 10px; font-style: italic; font-size: 17px; }
    .search::placeholder { color: #b4b8c0; opacity: 1; }
    .right .tool { width: 32px; height: 30px; }
    .login { gap: 8px; margin-left: 8px; }
    .login + .mini { margin-left: 85px; }
    .mini { width: 18px; height: 30px; }
    .right .cart { margin-left: 10px; }
    .rule { width: 2px; height: 27px; background: #4a5568; margin: 0 9px 0 10px; }
    .wc { width: 37px; height: 30px; }
    .wc1 { margin-left: 88px; }
    .wc2 { margin-right: 1px; }
    .tabs { display: flex; align-items: center; padding: 2px 0; }
    .tab { height: 25px; padding: 0 15px; color: #b3b7bd; border-radius: 2px 2px 0 0; }
    .tab.sel { background: #3b4453; color: #fff; }
    .ribmin { margin: 0 4px 0 30px; }

    .ribbon { display: flex; gap: 2px; padding: 0 4px 0 7px; }
    .panel { background: #3b4453; height: 145px; display: flex; flex-direction: column; flex: none; }
    .panel.p10 { flex: 1; }
    .body { display: flex; flex: 1; }
    .foot { display: flex; height: 26px; align-items: center; }
    .title { flex: 1; gap: 9px; }
    .corner { width: 18px; height: 20px; }
    .big { display: flex; flex-direction: column; justify-content: flex-start; width: 60px; padding-top: 10px; }
    .big .pic { margin-bottom: 5px; }
    .big .dn { padding-top: 4px; }
    .big.w59 { width: 59px; }
    .big.w62 { width: 62px; }
    .big.w64 { width: 64px; }
    .big.up { padding-top: 7px; }
    .big.full { width: 100%; }
    .big.full .pic { margin-bottom: 10px; }
    .glyph { font-family: Roboto, sans-serif; font-size: 59px; font-weight: 500; fill: #dcdcdc; }
    .col { display: flex; flex-direction: column; padding-top: 4px; }
    .line { display: flex; height: 36px; align-items: center; }
    .small { gap: 4px; height: 36px; }
    .cap { padding-top: 2px; }
    .box { width: 30px; display: flex; justify-content: center; }
    .drop { width: 18px; height: 36px; }
    .square { width: 36px; height: 36px; }
    .square.on { background: #48607c; border: 1px solid #74c3ff; height: 34px; }
    .p1 .body { padding: 0 10px 0 2px; }
    .p1 .col { margin-left: 6px; }
    .p1 .line .small .box { width: 34px; }
    .p2 .body { padding: 0 12px 0 8px; }
    .p2 .col:nth-child(-n + 2) { width: 88px; }
    .p2 .col:nth-child(3) { width: 112px; }
    .p2 .col { align-items: flex-start; }
    .p2 .drop { margin-left: 12px; }
    .p3 .body { padding: 0 2px 0 6px; }
    .p3 .big + .big { width: 64px; }
    .p3 .col { margin-left: 2px; }
    .p3 .drop { margin-left: 8px; }
    .p4 .body { padding: 0 3px 0 2px; }
    .p4 .small { gap: 0; }
    .p4 .small .box { width: 36px; }
    .p5 .body { padding: 0 12px 0 2px; }
    .p5 .col { margin-left: 2px; }
    .p6 .body { padding: 0 4px 0 2px; }
    .p6 .icons { width: 29px; }
    .p6 .icons .small, .p6 .icons .box { width: 29px; }
    .p7 .body { padding: 0 2px; }
    .p8 .body { padding: 0 4px 0 6px; }
    .p8 .col { margin-left: 4px; }
    .p9 .body { padding: 0 3px 0 7px; }
    .p9 .col { margin-left: 6px; }
    .p10 { padding-right: 3px; }
    .combo { position: relative; display: flex; align-items: center; background: #4e5a6e; border: 2px solid #2b323e; height: 33px; margin-top: 2px; }
    .combo select { flex: 1; height: 29px; align-self: stretch; }
    .combo > .ic { position: absolute; pointer-events: none; }
    .combo .end { position: absolute; right: 2px; top: 12px; pointer-events: none; }
    .layer { width: 312px; margin-bottom: 1px; }
    .layer > .ic { left: 5px; top: 2px; }
    .layer select { padding-left: 121px; }
    .prop { width: 205px; }
    .prop select { padding-left: 103px; }
    .prop .swatch { position: absolute; left: 18px; top: 3px; width: 24px; height: 24px; background: #fff; border: 2px solid #b9bcc2; pointer-events: none; }
    .prop.color select { padding-left: 58px; }
    .prop .stroke { position: absolute; left: 5px; top: 13px; width: 96px; height: 2px; background: #fff; pointer-events: none; }

    .docs { display: flex; height: 40px; padding: 7px 0 0 10px; }
    .docs-line { height: 6px; background: #3b4453; margin: 0 4px 0 3px; }
    .doc { position: relative; height: 33px; display: flex; align-items: center; width: 216px; padding: 2px 0 0 41px; color: #b3b7bd; }
    .doc.now { width: 208px; padding: 0 0 0 10px; color: #fff; justify-content: space-between; }
    .doc.now .x { margin-right: 47px; }
    .doc > svg.shape { position: absolute; left: 0; top: 0; z-index: 0; }
    .doc.now > svg.shape { left: -24px; }
    .doc > a, .doc > button { position: relative; z-index: 1; }
    .addDoc { width: 31px; height: 22px; background: #2f3644; margin: 7px 0 0 -17px; border-radius: 4px 14px 2px 16px; align-self: flex-start; position: relative; }

    .canvas { position: relative; flex: 1; margin: 0 4px 0 3px; background: #212830; overflow: hidden; min-height: 700px; }
    .canvas > svg.layer0 { position: absolute; inset: 0; width: 100%; height: 100%; }
    .dimtext { font-family: "Liberation Sans", sans-serif; font-size: 46px; fill: #fff; }
    .axis { font-family: Inter, "Liberation Sans", sans-serif; font-weight: 300; font-size: 26px; fill: #e8e8e8; }
    .viewlabel { position: absolute; left: 3px; top: 5px; color: #f2f2f2; display: flex; font-size: 19px; }
    .winctl { position: absolute; right: 11px; top: 11px; display: flex; gap: 12px; }
    .cube { position: absolute; right: 9px; top: 52px; width: 170px; height: 210px; }
    .cube text { font-family: "Noto Serif CJK SC", "Noto Sans CJK SC", serif; }
    .dir { font-size: 21px; fill: #b4b5b6; }
    .face { font-size: 36px; fill: #4a546c; }
    .wcs { position: absolute; right: 61px; top: 229px; width: 69px; height: 26px; border-radius: 6px; background: #9b9ca8; border: 2px solid #878997; color: #4c4f57; font: 16px/22px "Liberation Sans", sans-serif; gap: 8px; }
    .nav { position: absolute; right: 3px; top: 289px; width: 46px; height: 311px; background: #5a5e62; border: 1px solid #6c7074; border-radius: 4px; box-shadow: 0 0 2px 1px #15191f; display: flex; flex-direction: column; align-items: center; padding: 1px 0; }
    .nav .edge { align-self: flex-end; margin-right: 3px; }
    .nav .t { height: 34px; margin-top: 11px; }
    .nav .t2 { height: 34px; margin-top: 7px; }
    .nav .c { height: 10px; margin-top: 7px; }
    .nav hr { width: 38px; border: 0; border-top: 1px solid #6b6f73; margin: 4px 0 0; }
    .nav .last { margin-top: auto; }
    .dyn { position: absolute; left: 476px; top: 245px; display: flex; align-items: flex-start; gap: 3px; font-size: 19px; color: #000; }
    .dyn label { background: #989898; border: 1px solid #000; width: 103px; height: 35px; padding: 3px 5px; font-size: 18px; margin-right: 1px; }
    .dyn input { width: 115px; height: 30px; border: 1px solid #000; background: #989898; padding: 0 5px; line-height: 24px; }
    .dyn .live { background: #cde8d0; }
    .dyn .live::selection { background: #0078d7; color: #fff; }
    .ucs { position: absolute; left: 0; bottom: 3px; }

    .history { position: absolute; left: 525px; bottom: 43px; display: flex; flex-direction: column; align-items: flex-start; gap: 7px; font-family: "Liberation Mono", "Noto Sans CJK SC", monospace; font-size: 19px; }
    .history span { background: #535456; border-radius: 4px; padding: 0 5px 0 3px; height: 24px; white-space: pre; color: #b0b0b0; }
    .history span:nth-child(2) { background: #595a5b; color: #d0d0d0; }
    .history span:nth-child(3) { background: #646464; color: #fff; }
    .cmd { position: absolute; left: 430px; right: 429px; bottom: 0; height: 40px; background: #2b313d; border-radius: 4px 4px 0 0; display: flex; align-items: center; }
    .grip { width: 2px; height: 26px; margin: 0 9px 0 12px; background: repeating-linear-gradient(#e0e0e0 0 2px, transparent 2px 5px); }
    .cmd .x { width: 16px; height: 30px; }
    .cmd .w { margin: 0 7px 0 15px; height: 30px; }
    .entry { flex: 1; height: 36px; background: #cde8d0; border-radius: 3px; display: flex; align-items: center; padding: 0 5px 0 6px; color: #000; font-family: "Liberation Mono", "Noto Sans CJK SC", monospace; }
    .entry label { white-space: pre; margin-left: 8px; display: flex; gap: 9px; font-size: 19px; }
    .entry b { font-size: 18px; }
    .entry .d { margin-left: 3px; }
    .entry input { flex: 1; }

    .layouts { display: flex; border-top: 2px solid #43474f; margin: 0 4px 0 3px; padding-left: 10px; }
    .lay { position: relative; width: 82px; height: 26px; color: #b3b7bd; background: #2e3542; clip-path: polygon(0 0, 100% 0, 97% 10%, 89% 88%, 85% 100%, 20% 100%, 15% 88%, 7% 10%); }
    .lay.sel { width: 86px; margin-right: -9px; background: #3b4453; color: #fff; font-weight: 700; z-index: 1; }
    .lay.add { width: 44px; height: 23px; margin-left: 2px; }
    .status { display: flex; justify-content: flex-end; gap: 6px; padding: 5px 4px 5px 0; margin-top: 1px; }
    .grp { display: flex; gap: 2px; }
    .unit { display: flex; background: #3b4453; height: 36px; }
    .sb { height: 36px; width: 36px; }
    .sb.v { width: 24px; }
    .sb.wide { width: 41px; }
    .sb.on { background: #5f8fc0; border: 1px solid #3b4453; overflow: hidden; }
    .sb.perf { background: #527095; }
    .coords { width: 270px; justify-content: flex-end; padding-right: 7px; font-size: 16px; font-weight: 500; color: #c6c9ce; height: 36px; }
    .model { width: 41px; padding-left: 5px; font-weight: 700; color: #fff; height: 36px; }
    .scale { width: 108px; height: 36px; font-size: 16px; font-weight: 500; justify-content: space-between; padding: 0 6px 0 9px; color: #fff; }
    .unitsel { position: relative; display: flex; align-items: center; width: 110px; }
    .unitsel select { width: 110px; height: 36px; padding-left: 9px; color: #fff; font-weight: 500; }
    .unitsel .ic { position: absolute; right: 6px; pointer-events: none; }

    .mark { position: absolute; right: 100px; bottom: 42px; width: 420px; height: 200px; pointer-events: none; }
    .bai { font-family: "Liberation Sans", sans-serif; font-weight: 700; font-size: 87px; fill: #bfc1c4; }
    .du { font-family: "Liberation Sans", sans-serif; font-weight: 700; font-size: 54px; fill: #262c36; }
    .jy { font-family: "Noto Sans CJK SC", sans-serif; font-weight: 900; font-size: 65px; fill: #bfc1c4; }
    .url { font-family: "Open Sans", sans-serif; font-size: 45px; font-weight: 500; fill: #d6d7d9; }
  `;

  firstUpdated() {
    this.dx.focus({ preventScroll: true });
    this.dx.select();
  }

  private statusItem(key: string) {
    if (key === "!coords") return html`<button class="coords">3532.9237, 1157.1021, 0.0000</button>`;
    if (key === "!model") return html`<button class="model">模型</button>`;
    if (key === "!scale") return html`<button class="scale">1:1 / 100%${icon("bigCaret")}</button>`;
    if (key === "!units")
      return html`<span class="unitsel"><select aria-label="单位格式"><option>小数</option></select>${icon("bigCaret")}</span>`;
    const on = key.startsWith("*");
    const k = on ? key.slice(1) : key;
    if (k === "v") return html`<button class="sb v" aria-label="更多">${icon("bigCaret")}</button>`;
    return html`<button class="sb ${on ? "on" : ""} ${k === "sGraph" ? "wide" : ""} ${k === "sPerf" ? "perf" : ""}" aria-label=${NAMES[k]}>${icon(k)}</button>`;
  }

  private drawing() {
    const minor = STEP / 5;
    return html`<svg class="layer0" aria-hidden="true">
      <g stroke="#262d38">
        ${series(4, 200, minor).map((x) => svg`<line x1=${x} x2=${x} y1="0" y2="100%" />`)}
        ${series(4, 120, minor).map((y) => svg`<line y1=${y} y2=${y} x1="0" x2="100%" />`)}
      </g>
      <g stroke="#2d3545">
        ${series(71, 40, STEP).map((x) => svg`<line x1=${x} x2=${x} y1="0" y2="100%" />`)}
        ${series(54, 24, STEP).map((y) => svg`<line y1=${y} y2=${y} x1="0" x2="100%" />`)}
      </g>
      <path d="M435.500 200 V147.500 H1088.500 V200" fill="none" stroke="#d8d8d8" />
      <rect x="435.500" y="201.500" width="653" height="304" fill="none" stroke="#2b55b0" stroke-width="5" opacity=".5" />
      <rect x="435.500" y="201.500" width="653" height="304" fill="none" stroke="#3565cc" stroke-width="3" />
      <rect x="435.500" y="201.500" width="653" height="304" fill="none" stroke="#d4e2ff" />
      <path d="M435.500 193 V208 M428 200.500 H443" stroke="#1f9a36" stroke-width="1" />
      <path d="M388 220.500 H517 M452.500 156 V285" stroke="#f0f0f0" />
      <text class="dimtext" x="678" y="139">1953,72</text>
      <g id="arrow">
        <path d="M424 206 L397 225 L405 230 L340 349 Q338 356 344 358 Q349 359 352 353 L414 235 L423 239 Z" fill="#15191f" opacity=".5" transform="translate(2 3)" />
        <path d="M424 206 L397 225 L405 230 L340 349 Q338 356 344 358 Q349 359 352 353 L414 235 L423 239 Z" fill="#ff4340" />
      </g>
    </svg>`;
  }

  render() {
    return html`<div class="window">
      <header class="head">
        <a class="logo" href="#" aria-label="应用程序菜单">${icon("logo")}</a>
        <div>
          <div class="titlebar">
            <div class="qat">
              ${[["new", "新建"], ["open", "打开"], ["save", "保存"], ["saveas", "另存为"], ["mobOpen", "从移动设备打开"], ["mobSave", "保存到移动设备"], ["print", "打印"], ["undo", "放弃"]].map(
                ([n, t]) => html`<button class="tool" aria-label=${t}>${icon(n)}</button>`
              )}<button class="mini" aria-label="放弃列表">${icon("caret")}</button><button class="tool" aria-label="重做">${icon("redo")}</button><button class="mini" aria-label="重做列表">${icon("caret")}</button><button class="opt" aria-label="自定义快速访问工具栏">${icon("custom")}</button>
            </div>
            <div class="name"><span>Autodesk AutoCAD 2021</span><span>Drawing1.dwg</span></div>
            <div class="right">
              ${icon("tri")}
              <input class="search" type="search" aria-label="搜索" placeholder="键入关键字或短语" />
              <button class="tool" aria-label="搜索">${icon("search")}</button>
              <button class="login">${icon("user")}登录</button>
              <button class="mini" aria-label="帐户">${icon("caret")}</button>
              <button class="tool cart" aria-label="商店">${icon("cart")}</button>
              <button class="tool" aria-label="Autodesk 360">${icon("a360")}</button>
              <button class="mini" aria-label="应用列表">${icon("caret")}</button>
              <span class="rule"></span>
              <button class="tool" aria-label="帮助">${icon("help")}</button>
              <button class="mini" aria-label="帮助列表">${icon("caret")}</button>
              <button class="wc wc1" aria-label="最小化">${icon("min")}</button>
              <button class="wc" aria-label="最大化">${icon("max")}</button>
              <button class="wc wc2" aria-label="关闭">${icon("close")}</button>
            </div>
          </div>
          <nav class="tabs">
            ${["默认", "插入", "注释", "参数化", "视图", "管理", "输出", "附加模块", "协作", "精选应用"].map((t, i) => html`<button class="tab ${i ? "" : "sel"}">${t}</button>`)}
            <button class="ribmin" aria-label="最小化功能区">${icon("ribMin")}</button>${icon("caret")}
          </nav>
        </div>
      </header>

      <div class="ribbon">
        ${panel("p1", "绘图", html`${big("line", ["直线"])}${big("pline", ["多段线"])}${big("circle", ["圆"], true)}${big("arc", ["圆弧"], true, "w64")}
          <div class="col">${[["rect", "矩形"], ["ellipse", "椭圆"], ["hatch", "图案填充"]].map(([n, t]) => html`<div class="line">${small(n, t, false)}${drop(t + "列表")}</div>`)}</div>`)}
        ${panel("p2", "修改", html`
          <div class="col">${small("move", "移动")}${small("copy", "复制")}${small("stretch", "拉伸")}</div>
          <div class="col">${small("rotate", "旋转")}${small("mirror", "镜像")}${small("scale", "缩放")}</div>
          <div class="col">${[["trim", "修剪"], ["fillet", "圆角"], ["array", "阵列"]].map(([n, t]) => html`<div class="line">${small(n, t)}${drop(t + "列表")}</div>`)}</div>
          <div class="col">${small("erase", "删除", false)}${small("explode", "分解", false)}${small("offset", "偏移", false)}</div>`)}
        ${panel("p3", "注释", html`${big("text", ["文字"], true, "w62")}${big("dim", ["标注"])}
          <div class="col">
            <div class="line">${small("linear", "线性")}${drop("线性列表")}</div>
            <div class="line">${small("leader", "引线")}${drop("引线列表")}</div>
            <div class="line">${small("table", "表格")}</div>
          </div>`)}
        ${panel("p4", "图层", html`${big("layers", ["图层", "特性"], false, "w59")}
          <div class="col">
            <div class="combo layer">${icon("layState")}<select aria-label="图层"><option>0</option></select><span class="end">${icon("bigCaret")}</span></div>
            <div class="line">${["lyOff:关", "lyIso:隔离", "lyFrz:冻结", "lyLock:锁定"].map((s) => square(s.split(":")[0], s.split(":")[1]))}${small("lyCur", "置为当前")}</div>
            <div class="line">${["lyOn:打开", "lyUniso:取消隔离", "lyThaw:解冻", "lyUnlock:解锁"].map((s) => square(s.split(":")[0], s.split(":")[1]))}${small("lyMatch", "匹配图层")}</div>
          </div>`)}
        ${panel("p5", "块", html`${big("insert", ["插入"], true, "up")}
          <div class="col"><div class="line">${small("create", "创建")}</div><div class="line">${small("edit", "编辑")}</div><div class="line">${small("tag", "属性", false)}${drop("属性列表")}</div></div>`)}
        ${panel("p6", "特性", html`${big("matchProp", ["特性", "匹配"])}
          <div class="col icons">${small("wheel", "颜色", false)}${small("weights", "线宽", false)}${small("types", "线型", false)}</div>
          <div class="col">
            <div class="combo prop color"><span class="swatch"></span><select aria-label="颜色"><option>ByLayer</option></select><span class="end">${icon("bigCaret")}</span></div>
            <div class="combo prop"><span class="stroke"></span><select aria-label="线宽"><option>ByLayer</option></select><span class="end">${icon("bigCaret")}</span></div>
            <div class="combo prop"><span class="stroke"></span><select aria-label="线型"><option>ByLayer</option></select><span class="end">${icon("bigCaret")}</span></div>
          </div>`, true, true)}
        ${panel("p7", "组", html`${big("group", ["组"])}<div class="col">${square("ungroup", "解除编组")}${square("grpEdit", "组编辑")}${square("grpSel", "启用/禁用组选择", true)}</div>`)}
        ${panel("p8", "实用工具", html`${big("measure", ["测量"], true, "w62")}<div class="col">${square("quick", "快速选择")}${square("selAll", "全部选择")}${square("calc", "快速计算器")}</div>`)}
        ${panel("p9", "剪贴板", html`${big("paste", ["粘贴"], true)}<div class="col">${square("cut", "剪切")}${square("copyClip", "复制剪裁")}</div>`, false)}
        ${panel("p10", "视图", html`${big("base", ["基点"], true, "full")}`, true, true)}
      </div>

      <nav class="docs">
        <div class="doc"><svg class="shape" width="222" height="33" viewBox="0 0 222 33" aria-hidden="true"><path d="M0 33 C20 31 22 22 26 12 Q29 0 40 0 H196 Q208 0 212 14 L216 33 Z" fill="#2f3644" /></svg><a href="#">开始</a></div>
        <div class="doc now"><svg class="shape" width="236" height="33" viewBox="0 0 236 33" aria-hidden="true"><path d="M0 33 C16 31 18 22 22 12 Q25 1 36 1 H188 Q201 1 205 13 Q211 31 236 33 Z" fill="#3b4453" /></svg><a href="#">Drawing1*</a><button class="x" aria-label="关闭图形">${icon("tabX")}</button></div>
        <button class="addDoc" aria-label="新图形">${icon("plus")}</button>
      </nav>
      <div class="docs-line"></div>

      <main class="canvas">
        ${this.drawing()}
        <div class="viewlabel"><button>[−]</button><button>[俯视]</button><button>[二维线框]</button></div>
        <div class="winctl"><button aria-label="最小化图形">${icon("wMin")}</button><button aria-label="还原图形">${icon("wRest")}</button><button aria-label="关闭图形窗口">${icon("wClose")}</button></div>
        <svg class="cube" viewBox="0 0 170 210" role="img" aria-label="视图方位">
          <circle cx="85" cy="75" r="61" fill="none" stroke="#43484f" stroke-width="15" />
          <rect x="55" y="46" width="60" height="60" fill="#acaeaf" /><rect x="67" y="58" width="36" height="36" fill="#9ea5ab" />
          <text class="face" x="85" y="89" text-anchor="middle">上</text>
          <text class="dir" x="85" y="20" text-anchor="middle">北</text><text class="dir" x="85" y="150" text-anchor="middle">南</text>
          <text class="dir" x="20" y="85" text-anchor="middle">西</text><text class="dir" x="149" y="85" text-anchor="middle">东</text>
        </svg>
        <button class="wcs">WCS<svg class="ic" width="13" height="8" viewBox="0 0 13 8" aria-hidden="true"><path d="M.5 .5 H12.500 L6.500 7 Z" fill="#b3b4be" stroke="#777985" /></svg></button>
        <div class="nav">
          <button class="edge" aria-label="关闭导航栏">${icon("navX")}</button>
          <button class="t" aria-label="控制盘">${icon("navWheel")}</button><button class="c" aria-label="控制盘列表">${icon("navCaret")}</button><hr />
          <button class="t2" aria-label="平移">${icon("navHand")}</button>
          <button class="t2" aria-label="范围缩放">${icon("navZoom")}</button><button class="c" aria-label="缩放列表">${icon("navCaret")}</button>
          <button class="t2" aria-label="动态观察">${icon("navOrbit")}</button><button class="c" aria-label="动态观察列表">${icon("navCaret")}</button><hr />
          <button class="t2" aria-label="运动显示">${icon("navShow")}</button>
          <button class="edge last" aria-label="收拢导航栏">${icon("navMin")}</button>
        </div>
        <div class="dyn"><label for="dx">指定基点:</label><input id="dx" class="live" value="1638.9501" /><input aria-label="Y 坐标" value="2001.8778" /></div>
        <svg class="ucs" width="140" height="130" viewBox="0 0 140 130" aria-hidden="true">
          <path d="M23.500 36 V110.500 H98 M16.500 103.500 H30.500 V117.500 H16.500 Z" fill="none" stroke="#f0f0f0" stroke-width="1" />
          <text class="axis" x="33" y="32" text-anchor="middle">Y</text><text class="axis" x="111" y="109" text-anchor="middle">X</text>
        </svg>
        <div class="history"><span>选择对象: 找到 1 个</span><span>选择对象: 找到 1 个 (1 个重复), 总计 1 个</span><span>选择对象:</span></div>
        <div class="cmd">
          <span class="grip"></span><button class="x" aria-label="关闭命令行">${icon("cmdX")}</button><button class="w" aria-label="自定义命令行">${icon("wrench")}</button>
          <div class="entry">${icon("cmdScale")}<button class="d" aria-label="近期命令">${icon("darkCaret")}</button><label for="command"><b>SCALE</b><span>指定基点:</span></label><input id="command" /><button aria-label="命令历史">${icon("upCaret")}</button></div>
        </div>
      </main>

      <nav class="layouts"><button class="lay sel">模型</button><button class="lay">布局1</button><button class="lay">布局2</button><button class="lay add" aria-label="新建布局">${icon("plus")}</button></nav>
      <footer class="status">
        ${STATUS.map((g) => html`<div class="grp">${g.map((u) => html`<div class="unit">${u.map((k) => this.statusItem(k))}</div>`)}</div>`)}
      </footer>

      <svg class="mark" viewBox="0 0 420 200" aria-hidden="true">
        <g fill="#bfc1c4"><ellipse cx="166" cy="61" rx="14" ry="18" /><ellipse cx="193" cy="34" rx="13.500" ry="19" /><ellipse cx="227" cy="36" rx="14" ry="18" transform="rotate(8 227 36)" /><ellipse cx="249" cy="69" rx="14.500" ry="18" />
        <path d="M207 64 C222 64 228 80 238 90 C248 99 255 106 255 117 C255 130 246 136 234 136 C222 136 216 133 207 133 C198 133 192 136 180 136 C168 136 160 128 160 116 C160 104 168 98 176 90 C186 80 192 64 207 64 Z" /></g>
        <text class="bai" x="17" y="133">Bai</text><text class="du" x="207" y="124" text-anchor="middle">du</text><text class="jy" x="267" y="128">经验</text>
        <text class="url" x="22" y="184">jingyan.baidu.com</text>
      </svg>
    </div>`;
  }
}
